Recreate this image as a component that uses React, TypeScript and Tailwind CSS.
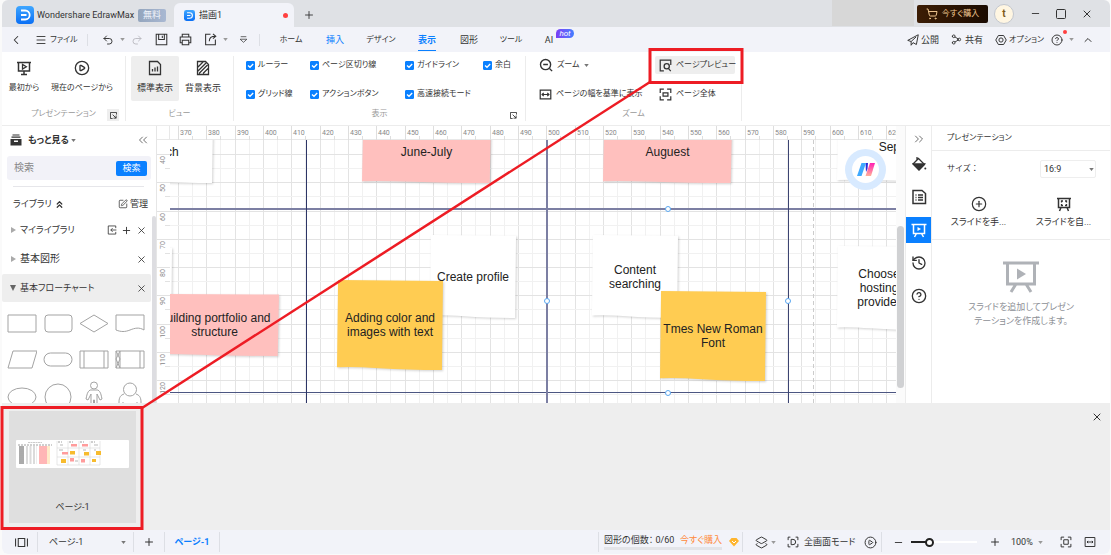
import { ReactNode, useState } from "react";
import {
  ChevronLeft,
  ChevronUp,
  ChevronsLeft,
  ChevronsRight,
  ChevronsUp,
  CircleHelp,
  CirclePlay,
  CirclePlus,
  History,
  Layers2,
  Menu,
  Minus,
  Plus,
  Redo2,
  Share2,
  ShoppingCart,
  Square,
  SquarePen,
  Undo2,
  X,
} from "lucide-react";

interface IconProps {
  children: ReactNode;
  className?: string;
}

function Icon({ children, className = "size-4" }: IconProps) {
  return (
    <svg
      viewBox="0 0 16 16"
      fill="none"
      stroke="currentColor"
      strokeWidth="1.3"
      className={`shrink-0 ${className}`}
      aria-hidden="true"
    >
      {children}
    </svg>
  );
}

function Caret({ className = "text-[#777]" }: { className?: string }) {
  return (
    <svg viewBox="0 0 6 4" className={`h-[3px] w-[5px] shrink-0 ${className}`} aria-hidden="true">
      <path d="M0 0h6L3 4z" fill="currentColor" />
    </svg>
  );
}

function EdrawLogo({ className }: { className: string }) {
  return (
    <svg viewBox="0 0 18 18" className={`shrink-0 ${className}`} aria-hidden="true">
      <defs>
        <linearGradient id="logo" x1="0" y1="0" x2="0" y2="1">
          <stop offset="0" stopColor="#3ea6ff" />
          <stop offset="1" stopColor="#0a6ff5" />
        </linearGradient>
      </defs>
      <rect width="18" height="18" rx="4" fill="url(#logo)" />
      <path
        d="M5 4.5h4.2a4.5 4.5 0 0 1 0 9H5M5 9h5.5"
        fill="none"
        stroke="#fff"
        strokeWidth="1.8"
      />
    </svg>
  );
}

function Divider({ className = "h-3" }: { className?: string }) {
  return <span className={`w-px shrink-0 bg-[#dddfe5] ${className}`} />;
}

function TitleBar() {
  return (
    <header className="flex h-[27px] shrink-0 items-center bg-[#dfe1e5] pl-[14px]">
      <div className="mt-[3px] flex items-center">
        <EdrawLogo className="size-[18px]" />
        <span className="ml-[3px] w-[101px] text-[#333]">Wondershare EdrawMax</span>
        <span className="flex h-[13px] w-7 items-center justify-center rounded-[2px] bg-linear-to-r from-[#93a5bd] to-[#a9b8d2] text-[#eef3fb]">
          無料
        </span>
      </div>
      <div className="ml-2 mt-[3px] flex h-6 w-[120px] items-center rounded-t-md bg-[#f2f3f9] pl-[10px] pr-[6px]">
        <EdrawLogo className="size-[11px]" />
        <span className="ml-1 flex-1">描画1</span>
        <span className="size-[5px] rounded-full bg-[#ff4040]" />
      </div>
      <button type="button" aria-label="新しいタブ" className="ml-[9px] mt-[2px]">
        <Plus className="size-3" strokeWidth={1.8} />
      </button>
      <div className="ml-auto h-[26px] w-[82px] self-start bg-[#d7d7d7]" />
      <button
        type="button"
        className="ml-[3px] flex h-[18px] w-[71px] items-center justify-center gap-1 rounded-[2px] bg-linear-to-r from-[#3c1d05] to-[#1a0b01] text-[8px] text-[#eec690]"
      >
        <ShoppingCart className="size-3" strokeWidth={2} />
        今すぐ購入
      </button>
      <span className="ml-[6px] flex size-5 items-center justify-center rounded-full border border-[#c3c7cf] bg-[#fff6e2] text-[10px] font-bold text-[#7d5b1c]">
        t
      </span>
      <div className="ml-4 mr-[17px] flex items-center gap-[14px]">
        <button type="button" aria-label="最小化">
          <Minus className="size-[11px]" strokeWidth={2} />
        </button>
        <button type="button" aria-label="最大化">
          <Square className="size-3" strokeWidth={2} />
        </button>
        <button type="button" aria-label="閉じる">
          <X className="size-3" strokeWidth={2} />
        </button>
      </div>
    </header>
  );
}

const MENU_TABS = [
  { label: "ホーム", width: "w-11 text-[8px]" },
  { label: "挿入", width: "w-11", accent: true },
  { label: "デザイン", width: "w-12 text-[8px]" },
  { label: "表示", width: "w-11", active: true },
  { label: "図形", width: "w-10" },
  { label: "ツール", width: "w-11 text-[8px]" },
  { label: "AI", width: "w-8", hot: true },
];

function MenuBar() {
  return (
    <div className="flex h-[25px] shrink-0 items-center bg-[#f2f3f9] pl-[7px] pr-4">
      <button type="button" aria-label="戻る">
        <ChevronLeft className="size-[14px]" strokeWidth={1.8} />
      </button>
      <button type="button" className="ml-3 flex w-10 items-center gap-[3px] text-[8px]">
        <Menu className="size-3 shrink-0" strokeWidth={1.8} />
        ファイル
      </button>
      <Divider className="ml-3 h-3" />
      <button type="button" aria-label="元に戻す" className="ml-[14px] flex items-center gap-[6px]">
        <Undo2 className="size-3" strokeWidth={1.9} />
        <Caret className="text-[#999]" />
      </button>
      <button type="button" aria-label="やり直し" className="ml-[6px]">
        <Redo2 className="size-3 text-[#b8b8be]" strokeWidth={1.8} />
      </button>
      <button type="button" aria-label="保存" className="ml-3">
        <Icon className="size-[13px]">
          <path d="M1.5 1.5h13v13h-13zM4.5 1.5v6.5h7V1.5M9 3.5V6" />
        </Icon>
      </button>
      <button type="button" aria-label="印刷" className="ml-[11px]">
        <Icon className="size-[13px]">
          <path d="M4 5V1.5h8V5M4 12H1.5V5h13v7H12M4 9h8v5.5H4z" />
        </Icon>
      </button>
      <button type="button" aria-label="エクスポート" className="ml-3 flex items-center gap-[6px]">
        <Icon className="size-[13px]">
          <path d="M8 1.500H2v13h12V8M6.500 10c0-4 2-6 7.500-6M11 1l3.500 3L11 7" />
        </Icon>
        <Caret className="text-[#999]" />
      </button>
      <button type="button" aria-label="その他" className="mx-[11px]">
        <Icon className="size-[9px]">
          <path d="M3 3h10M2 7.500h12L8 13z" />
        </Icon>
      </button>
      <Divider className="mr-[9px] h-3" />
      <nav className="flex h-full">
        {MENU_TABS.map((tab) => (
          <button
            key={tab.label}
            type="button"
            className={`relative flex h-full items-center justify-center ${tab.width} ${
              tab.active ? "font-bold text-[#0a80ff]" : tab.accent ? "text-[#0a80ff]" : ""
            }`}
          >
            {tab.label}
            {tab.active && (
              <span className="absolute bottom-px h-px w-[18px] bg-[#0a80ff]" />
            )}
            {tab.hot && (
              <span className="absolute -right-[9px] top-[2px] flex h-[9px] w-[18px] items-center justify-center rounded-t-full rounded-br-full bg-linear-to-r from-[#7a3cf5] to-[#3f7dff] text-[8px] leading-[9px] italic text-white">
                hot
              </span>
            )}
          </button>
        ))}
      </nav>
      <div className="ml-auto flex items-center">
        <button type="button" className="flex w-8 items-center gap-[2px]">
          <Icon className="size-3">
            <path d="M1 8.500 15 1l-2.500 13-4.500-2.500L5.500 15v-5zM5.500 10 12 4" />
          </Icon>
          公開
        </button>
        <button type="button" className="ml-3 flex w-8 items-center gap-[3px]">
          <Share2 className="size-[11px] -scale-x-100" strokeWidth={2} />
          共有
        </button>
        <button type="button" className="ml-3 flex w-[47px] items-center gap-[2px] text-[8px]">
          <Icon className="size-3">
            <path d="M4.500 2h7L15 8l-3.500 6h-7L1 8z" />
            <circle cx="8" cy="8" r="2.800" />
          </Icon>
          オプション
        </button>
        <button
          type="button"
          aria-label="ヘルプ"
          className="relative ml-[9px] flex items-center gap-[6px]"
        >
          <CircleHelp className="size-3" strokeWidth={1.9} />
          <span className="absolute -top-1 left-3 size-1 rounded-full bg-[#ff4040]" />
          <Caret className="text-[#999]" />
        </button>
        <button type="button" aria-label="リボンを閉じる" className="ml-2">
          <ChevronUp className="size-3" strokeWidth={2} />
        </button>
      </div>
    </div>
  );
}

interface RibbonGroupProps {
  title: string;
  children: ReactNode;
  width: string;
  launcher?: string;
}

function RibbonGroup({ title, children, width, launcher }: RibbonGroupProps) {
  return (
    <section className={`relative flex flex-col border-r border-[#ececec] text-[8px] ${width}`}>
      <div className="flex h-[52px]">{children}</div>
      <h2 className="flex h-3 items-center justify-center text-[#999]">{title}</h2>
      {launcher && (
        <button
          type="button"
          aria-label={`${title}の設定`}
          className={`absolute bottom-0 right-[6px] flex size-3 items-center justify-center ${launcher}`}
        >
          <Icon className="size-[7px]">
            <path d="M15 6V1H1v14h5M6 6l8 8M14 8v6H8" strokeWidth="2" />
          </Icon>
        </button>
      )}
    </section>
  );
}

function LargeButton({
  label,
  width,
  active,
  children,
}: {
  label: string;
  width: string;
  active?: boolean;
  children: ReactNode;
}) {
  return (
    <button
      type="button"
      className={`flex h-[45px] flex-col items-center gap-[6px] rounded-[2px] pt-1 ${width} ${
        active ? "bg-[#eeeeee]" : ""
      }`}
    >
      {children}
      {label}
    </button>
  );
}

const VIEW_OPTIONS = [
  "ルーラー",
  "ページ区切り線",
  "ガイドライン",
  "余白",
  "グリッド線",
  "アクションボタン",
  "高速接続モード",
];

function Check({ label }: { label: string }) {
  const [checked, setChecked] = useState(true);
  return (
    <label className="relative flex items-center gap-[3px]">
      <input
        type="checkbox"
        checked={checked}
        onChange={() => setChecked(!checked)}
        className="peer size-[9px] shrink-0 appearance-none rounded-[1px] border border-[#0a80ff] checked:bg-[#0a80ff]"
      />
      <svg
        viewBox="0 0 9 9"
        className="pointer-events-none absolute left-0 size-[9px] opacity-0 peer-checked:opacity-100"
        aria-hidden="true"
      >
        <path d="M2 4.500 4 6.300 7.200 3" fill="none" stroke="#fff" strokeWidth="1.300" />
      </svg>
      {label}
    </label>
  );
}

function Ribbon() {
  return (
    <div className="flex h-[74px] shrink-0 border-b border-[#ececec] bg-white pb-1 pt-1">
      <RibbonGroup title="プレゼンテーション" width="w-[124px]" launcher="bg-[#eeeeee]">
        <LargeButton label="最初から" width="w-11">
          <Icon>
            <path d="M1 2.500h14M2.500 2.500v8.500h11V2.500M8 11v3.500M5 14.500h6" strokeWidth="1.500" />
            <path d="M6.500 4.500v4.500L10.300 6.800z" />
          </Icon>
        </LargeButton>
        <LargeButton label="現在のページから" width="w-[72px]">
          <CirclePlay className="size-4" strokeWidth={2} />
        </LargeButton>
      </RibbonGroup>
      <RibbonGroup title="ビュー" width="w-[108px]">
        <LargeButton label="標準表示" width="ml-[5px] w-12 text-[9px]" active>
          <Icon>
            <path d="M2.500 1.500h8l3 3v10h-11zM5.500 11.500V9M8 11.500V7.500M10.500 11.500V6.500" />
          </Icon>
        </LargeButton>
        <LargeButton label="背景表示" width="w-12 text-[9px]">
          <Icon>
            <path d="M2.500 1.500h8l3 3v10h-11zM3 7l5-5M3 11l8-8M4 13.500l8.500-8.500M8 13.500l5-5" />
          </Icon>
        </LargeButton>
      </RibbonGroup>
      <RibbonGroup title="表示" width="w-[292px]" launcher="bg-white">
        <div className="ml-3 grid h-12 grid-cols-[64px_95px_78px_auto] content-between pb-1 pt-[3px]">
          {VIEW_OPTIONS.map((option) => (
            <Check key={option} label={option} />
          ))}
        </div>
      </RibbonGroup>
      <RibbonGroup title="ズーム" width="w-[216px]">
        <div className="ml-[13px] grid h-12 grid-cols-[116px_auto] content-between">
          <button type="button" className="flex h-[18px] items-center gap-1">
            <Icon className="size-[14px]">
              <circle cx="7.500" cy="7.500" r="5.800" strokeWidth="1.600" />
              <path d="M4.800 7.500h5.400M12 12l3 3" strokeWidth="1.600" />
            </Icon>
            ズーム
            <Caret />
          </button>
          <button
            type="button"
            className="flex h-[18px] w-20 items-center gap-1 rounded-[2px] bg-[#eeeeee] pl-1"
          >
            <Icon className="size-[13px]">
              <path d="M6 14.500H1.500v-13h13v6M11.500 11.500l3 3.500" strokeWidth="1.500" />
              <circle cx="9.500" cy="9" r="3.200" strokeWidth="1.600" />
            </Icon>
            ページプレビュー
          </button>
          <button type="button" className="flex h-5 items-center gap-1">
            <Icon className="size-[13px]">
              <path d="M1.500 2.500h13v11h-13zM4 8h8M5.800 6 3.800 8l2 2M10.200 6l2 2-2 2" strokeWidth="1.500" />
            </Icon>
            ページの幅を基準に表示
          </button>
          <button type="button" className="flex h-5 items-center gap-1 pl-1">
            <Icon className="size-[13px]">
              <path
                d="M1.500 6V1.500H6M10 1.500h4.500V6M14.500 10v4.500H10M6 14.500H1.500V10M5 6h6v4H5z"
                strokeWidth="1.500"
              />
            </Icon>
            ページ全体
          </button>
        </div>
      </RibbonGroup>
    </div>
  );
}

const SHAPES: ReactNode[] = [
  <path d="M1 6h28v17H1z" />,
  <rect x="2" y="6" width="27" height="17" rx="3" />,
  <path d="M1 14.500 15 6l14 8.500L15 23z" />,
  <path d="M1 6h28v15c-5-3-9-2-14 0s-9 2-14 0z" />,
  <path d="M6 6h24l-5 17H1z" />,
  <rect x="1" y="8" width="28" height="13" rx="6.500" />,
  <path d="M1 6h28v17H1zM5 6v17M25 6v17" />,
  <path d="M1 6h28v17H1zM5 6v17M25 6v17M1 6l4 8-4 9M5 6l-4 8 4 9" />,
  <ellipse cx="15" cy="16" rx="14" ry="9" />,
  <circle cx="15" cy="16" r="13" />,
  <path d="M15 1a3.500 3.500 0 1 1 0 7 3.500 3.500 0 0 1 0-7zM11 9h8c3 2 3 5 4 9l-2 1-3-6v14h-2.500v-8h-1v8H12V13l-3 6-2-1c1-4 1-7 4-9z" />,
  <path d="M15 2a6.500 6.500 0 1 1 0 13 6.500 6.500 0 0 1 0-13zM9 13c-3 1-5 3-5 8v8h22v-8c0-5-2-7-5-8M8 21v8M22 21v8" />,
];

interface LibraryRowProps {
  label: string;
  size?: string;
  open?: boolean;
  tools?: boolean;
}

function LibraryRow({ label, size = "text-[9px]", open, tools }: LibraryRowProps) {
  return (
    <li
      className={`flex h-7 items-center gap-1 rounded-[2px] pl-2 pr-1 ${size} ${
        open ? "bg-[#eeeeee]" : ""
      }`}
    >
      <svg viewBox="0 0 6 6" className="size-[6px] shrink-0" aria-hidden="true">
        {open ? <path d="M0 0h6L3 6z" fill="#666" /> : <path d="M1 0v6l5-3z" fill="#aaa" />}
      </svg>
      <span className="flex-1">{label}</span>
      {tools && (
        <>
          <button type="button" aria-label="読み込み">
            <Icon className="size-[10px]">
              <path d="M14 5V1.500H2v13h12V11M15 8H6M9 5 6 8l3 3" />
            </Icon>
          </button>
          <button type="button" aria-label="追加">
            <Plus className="size-[11px]" strokeWidth={2} />
          </button>
        </>
      )}
      <button type="button" aria-label={`${label}を閉じる`}>
        <X className="size-[11px]" strokeWidth={1.8} />
      </button>
    </li>
  );
}

function LibraryPanel() {
  return (
    <aside className="flex w-[155px] shrink-0 flex-col overflow-hidden border-r border-[#e6e6e6] bg-white">
      <div className="flex h-7 shrink-0 items-center pl-2 pr-[6px]">
        <svg viewBox="0 0 12 12" className="size-3 shrink-0" aria-hidden="true">
          <path d="M2.500 1h7M1.500 3.200h9" stroke="#333" strokeWidth="1.200" />
          <path d="M.5 5h11v6.500H.5z" fill="#333" />
          <path d="M4 6.500h4v1.500H4z" fill="#fff" />
        </svg>
        <button type="button" className="ml-[6px] flex items-center gap-[2px] font-bold">
          もっと見る
          <Caret />
        </button>
        <button type="button" aria-label="パネルを閉じる" className="ml-auto">
          <ChevronsLeft className="size-[14px] text-[#666]" strokeWidth={1.6} />
        </button>
      </div>
      <form
        onSubmit={(event) => event.preventDefault()}
        className="ml-[5px] mr-[5px] mt-[2px] flex h-6 shrink-0 items-center rounded-[3px] bg-[#f2f2f8] pl-[7px] pr-1"
      >
        <input
          type="search"
          aria-label="検索"
          placeholder="検索"
          className="min-w-0 flex-1 bg-transparent text-[10px] outline-none placeholder:text-[#888]"
        />
        <button
          type="submit"
          className="flex h-[15px] w-[31px] items-center justify-center rounded-[2px] bg-[#0a80ff] text-white"
        >
          検索
        </button>
      </form>
      <hr className="ml-[11px] mr-3 mt-[6px] shrink-0 border-[#e6e6ea]" />
      <div className="mt-[5px] flex h-6 shrink-0 items-center pl-[11px] pr-2">
        <span>ライブラリ</span>
        <ChevronsUp className="ml-[2px] size-[11px]" strokeWidth={2.6} />
        <button type="button" className="ml-auto flex items-center gap-[2px]">
          <SquarePen className="size-[10px]" strokeWidth={1.8} />
          管理
        </button>
      </div>
      <div className="flex min-h-0 flex-1">
        <div className="flex-1">
          <ul className="flex flex-col gap-px">
            <LibraryRow label="マイライブラリ" tools />
            <LibraryRow label="基本図形" size="text-[10px]" />
            <LibraryRow label="基本フローチャート" open />
          </ul>
          <div className="ml-[2px] grid w-36 grid-cols-4 pt-1">
            {SHAPES.map((shape, index) => (
              <div key={index} className="flex h-9 items-center justify-center">
                <svg viewBox="0 0 30 30" fill="none" stroke="#a3a3a3" className="size-[30px]">
                  {shape}
                </svg>
              </div>
            ))}
          </div>
        </div>
        <div className="ml-px w-1 rounded-t-full bg-[#dddde1]" />
      </div>
    </aside>
  );
}

const MAJOR_X = Array.from({ length: 26 }, (_, i) => Math.round(8 + (i * 85) / 3));
const MAJOR_Y = Array.from({ length: 9 }, (_, i) => Math.round(14 + (i * 113) / 4));

const NOTE_COLORS = {
  white: "#ffffff",
  pink: "#ffc0be",
  yellow: "#ffcc52",
};

interface NoteProps {
  place: string;
  color: keyof typeof NOTE_COLORS;
  lines?: string[];
}

// the lower edge curls a little, like a real sticky note
function Note({ place, color, lines = [] }: NoteProps) {
  return (
    <div className={`absolute flex flex-col items-center justify-center ${place}`}>
      <svg
        viewBox="0 0 100 100"
        preserveAspectRatio="none"
        className="absolute inset-0 size-full overflow-visible drop-shadow-[1px_1px_1px_rgba(0,0,0,0.18)]"
        aria-hidden="true"
      >
        <path d="M1 0 100 1 99 100 Q65 100 40 98 T0 97z" fill={NOTE_COLORS[color]} />
      </svg>
      {lines.map((line) => (
        <span key={line} className="relative">
          {line}
        </span>
      ))}
    </div>
  );
}

function Handle({ place }: { place: string }) {
  return <span className={`absolute size-[6px] rounded-full border border-[#5aa7f0] bg-white ${place}`} />;
}

function Canvas() {
  return (
    <div className="flex min-w-0 flex-1 flex-col overflow-hidden bg-white">
      <div className="flex h-[14px] shrink-0 border-b border-[#e8e8e8]">
        <div className="w-[13px] shrink-0 border-r border-[#e8e8e8]" />
        <svg className="h-[14px] min-w-0 flex-1" aria-hidden="true">
          {MAJOR_X.map((x, i) => (
            <g key={x}>
              <path d={`M${x + 0.5} 0v14M${x + 14.5} 10v4`} stroke="#dedede" />
              <text x={x + 2} y="9" className="fill-[#888] text-[7px]">
                {370 + i * 10}
              </text>
            </g>
          ))}
        </svg>
      </div>
      <div className="flex min-h-0 flex-1">
        <svg className="h-full w-[13px] shrink-0" aria-hidden="true">
          {MAJOR_Y.map((y, i) => (
            <g key={y}>
              <path d={`M0 ${y + 0.5}h13M8 ${y + 14.5}h5`} stroke="#e2e2e2" />
              <text
                transform={`translate(8 ${y + 2}) rotate(-90)`}
                textAnchor="end"
                className="fill-[#888] text-[7px]"
              >
                {40 + i * 10}
              </text>
            </g>
          ))}
        </svg>
        <div className="relative min-w-0 flex-1 overflow-hidden whitespace-nowrap font-['Liberation_Sans',Arial,sans-serif] text-[12px] leading-[14px] text-[#222]">
          <svg className="absolute inset-0 size-full" aria-hidden="true">
            {MAJOR_X.map((x) => (
              <g key={x}>
                <line x1={x + 0.5} x2={x + 0.5} y1="0" y2="100%" stroke="#e3e3e3" />
                <line x1={x + 14.5} x2={x + 14.5} y1="0" y2="100%" stroke="#f1f1f1" />
              </g>
            ))}
            {MAJOR_Y.map((y) => (
              <g key={y}>
                <line x1="0" x2="100%" y1={y + 0.5} y2={y + 0.5} stroke="#e3e3e3" />
                <line x1="0" x2="100%" y1={y + 14.5} y2={y + 14.5} stroke="#f1f1f1" />
              </g>
            ))}
            <line x1="643.5" x2="643.5" y1="0" y2="100%" stroke="#cccccc" strokeDasharray="4 3" />
            <line x1="0" x2="100%" y1="69" y2="69" stroke="#7c7fa3" strokeWidth="2" />
            <line x1="0" x2="100%" y1="252.5" y2="252.5" stroke="#4c5682" />
            <line x1="136.5" x2="136.5" y1="0" y2="100%" stroke="#2d3566" />
            <line x1="377" x2="377" y1="0" y2="100%" stroke="#7c7fa3" strokeWidth="2" />
            <line x1="618.5" x2="618.5" y1="0" y2="100%" stroke="#3c4472" />
          </svg>
          <Note place="-left-[59px] -top-[19px] h-[62px] w-[102px]" color="white" lines={["March"]} />
          <Note place="left-[192px] -top-[19px] h-[62px] w-[129px]" color="pink" lines={["June-July"]} />
          <Note place="left-[433px] -top-[19px] h-[62px] w-[129px]" color="pink" lines={["Auguest"]} />
          <Note place="left-[667px] -top-[28px] h-[70px] w-[142px]" color="white" lines={["September"]} />
          <Note place="-left-[84px] top-[107px] h-[83px] w-[86px]" color="white" />
          <Note
            place="-left-[20px] top-[154px] h-[62px] w-[129px]"
            color="pink"
            lines={["Building portfolio and", "structure"]}
          />
          <Note place="left-[260px] top-[95px] h-[83px] w-[86px]" color="white" lines={["Create profile"]} />
          <Note
            place="left-[167px] top-[140px] h-[90px] w-[106px]"
            color="yellow"
            lines={["Adding color and", "images with text"]}
          />
          <Note
            place="left-[422px] top-[95px] h-[83px] w-[86px]"
            color="white"
            lines={["Content", "searching"]}
          />
          <Note
            place="left-[490px] top-[151px] h-[90px] w-[106px]"
            color="yellow"
            lines={["Tmes New Roman", "Font"]}
          />
          <Note
            place="left-[667px] top-[106px] h-[84px] w-[84px]"
            color="white"
            lines={["Choose", "hosting", "provider"]}
          />
          <Handle place="left-[495px] top-[66px]" />
          <Handle place="left-[374px] top-[158px]" />
          <Handle place="left-[615px] top-[158px]" />
          <Handle place="left-[495px] top-[250px]" />
          <svg viewBox="0 0 41 41" className="absolute left-[675px] top-[9px] size-[41px]" aria-hidden="true">
            <defs>
              <linearGradient id="mark" x1="0" y1="0" x2="0" y2="1">
                <stop offset="0" stopColor="#ff1fb4" />
                <stop offset="1" stopColor="#ffb199" />
              </linearGradient>
            </defs>
            <circle cx="20.500" cy="20.500" r="20.500" fill="#d8eaff" />
            <circle cx="20.500" cy="20.500" r="13.500" fill="#fff" />
            <path d="M20.500 14H23l-.5 6-1.500 3z" fill="#2a2bd8" />
            <path d="M16.500 14h4.500L16.500 27H12z" fill="#3ea9ff" />
            <path d="M25 14h5l-4 13h-5.500z" fill="url(#mark)" />
          </svg>
        </div>
      </div>
    </div>
  );
}

function ToolStrip() {
  return (
    <div className="flex w-[26px] shrink-0 flex-col gap-[7px] border-r border-[#ececec] bg-white [&>button]:flex [&>button]:h-[26px] [&>button]:items-center [&>button]:justify-center">
      <button type="button" aria-label="折りたたむ" className="-mb-2">
        <ChevronsRight className="size-[14px] text-[#666]" strokeWidth={1.6} />
      </button>
      <button type="button" aria-label="塗りつぶし">
        <Icon>
          <path d="M6 1v3M7.500 2.500l6 6L8 14 2 8z" />
          <path d="M2.500 8h11L8 13.500z" fill="currentColor" />
          <circle cx="14.300" cy="12.500" r="1" fill="currentColor" stroke="none" />
        </Icon>
      </button>
      <button type="button" aria-label="ページ設定">
        <Icon>
          <path d="M2 1.500h9l3.500 3v10H2zM4.500 6h1M7 6h5M4.500 8.500h1M7 8.500h5M4.500 11h1M7 11h5" strokeWidth="1.500" />
        </Icon>
      </button>
      <button type="button" aria-label="プレゼンテーション" className="bg-[#0a80ff] text-white">
        <Icon>
          <path d="M.5 2.500h15M2.500 2.500v9h11v-9M5.500 11.500 3.500 15M10.500 11.500l2 3.500" strokeWidth="1.500" />
          <path d="M6.500 5v4l3.500-2z" fill="currentColor" stroke="none" />
        </Icon>
      </button>
      <button type="button" aria-label="履歴">
        <History className="size-4" strokeWidth={2} />
      </button>
      <button type="button" aria-label="ヘルプ">
        <CircleHelp className="size-4" strokeWidth={2} />
      </button>
    </div>
  );
}

function PresentationPanel() {
  return (
    <aside className="flex w-[178px] shrink-0 flex-col bg-white">
      <h2 className="flex h-[25px] items-center border-b border-[#ececec] pl-[15px] text-[8px]">
        プレゼンテーション
      </h2>
      <div className="flex h-9 items-center justify-between pl-[15px] pr-[14px]">
        <label htmlFor="size" className="text-[8px] [font-feature-settings:normal]">
          サイズ：
        </label>
        <div className="relative flex items-center">
          <select
            id="size"
            className="h-[18px] w-14 appearance-none rounded-[2px] border border-[#eeeeee] pl-[3px] leading-none outline-none"
          >
            <option>16:9</option>
          </select>
          <span className="pointer-events-none absolute right-[2px]">
            <Caret />
          </span>
        </div>
      </div>
      <div className="grid h-[53px] grid-cols-2 border-b border-[#ececec] px-1 pt-[9px]">
        <button type="button" className="flex flex-col items-center gap-1">
          <CirclePlus className="size-4 shrink-0" strokeWidth={1.8} />
          スライドを手...
        </button>
        <button type="button" className="flex flex-col items-center gap-1">
          <Icon>
            <path d="M1 2.500h14M2.500 2.500v9h11v-9M5 11.500 3.500 15M11 11.500l1.500 3.500" strokeWidth="1.500" />
            <path d="M5.500 6.500v-1.500h1.500M9 5h1.500v1.500M10.500 8v1.500H9M7 9.500H5.500V8" />
          </Icon>
          スライドを自...
        </button>
      </div>
      <div className="flex flex-col items-center pt-[21px] text-[#8d9096]">
        <svg viewBox="0 0 36 32" className="h-8 w-9" fill="none" stroke="#afb2b7" aria-hidden="true">
          <path d="M0 2h36" strokeWidth="3" />
          <path d="M4.500 2v21h27V2M13 23l-5 8M23 23l5 8" strokeWidth="3" />
          <path d="M14 7.500v11l9-5.500z" fill="#afb2b7" stroke="none" />
        </svg>
        <p className="mt-[7px] text-center leading-[14px]">
          スライドを追加してプレゼン
          <br />
          テーションを作成します。
        </p>
      </div>
    </aside>
  );
}

const THUMB_ROWS = [7, 9, 11, 13, 15, 17, 19, 21, 23];

function PagePreview() {
  return (
    <section className="flex shrink-0 items-start justify-between bg-[#eeeeee] pb-[7px] pl-[7px] pr-[7px] pt-2">
      <figure className="flex h-28 w-[127px] flex-col items-center justify-between bg-[#dfdfdf] pb-[10px] pt-[29px]">
        <svg viewBox="0 0 113 28" className="h-7 w-[113px]" aria-hidden="true">
          <rect width="113" height="28" rx="1" fill="#fff" />
          <path d="M12 2.500h14" stroke="#aaa" strokeWidth=".6" strokeDasharray="2 .5" />
          <path d="M2 5h34M42 2h4M53 2h4M64 2h4M75 2h4" stroke="#888" strokeWidth=".8" strokeDasharray="2 1" />
          {THUMB_ROWS.map((y) => (
            <g key={y}>
              <path d={`M3 ${y}h5`} stroke="#444" strokeWidth=".9" />
              <path d={`M10 ${y}h11`} stroke="#999" strokeWidth=".7" strokeDasharray="2 1.500" />
              <path d={`M23 ${y}h8`} stroke="#ff8f8f" strokeWidth="1.300" />
              <path d={`M31 ${y}h3`} stroke="#ffe0ae" strokeWidth="1.300" />
            </g>
          ))}
          <path d="M41 1v24M52 1v24M63 1v24M74 1v24M84 1v24M41 8h43M41 17h43M41 25h43" stroke="#ccc" strokeWidth=".5" />
          <path d="M55 4h6v2.500h-6zM66 4h6v2.500h-6zM46 12h6v2.500h-6zM54 18h4v3.500h-4zM65 19h4v3.500h-4z" fill="#ff9c9c" />
          <path d="M54 11h5v3.500h-5zM68 12h5v3.500h-5zM80 11h5v4h-5zM45 19h5v4h-5zM76 19h4v3h-4z" fill="#f7bb2e" />
          <path d="M44 5h3M78 5h4M43 10h4M67 10h3M59 21h3M78 10h2" stroke="#999" strokeWidth=".7" />
        </svg>
        <figcaption>ページ-1</figcaption>
      </figure>
      <button type="button" aria-label="プレビューを閉じる">
        <X className="size-3" strokeWidth={2} />
      </button>
    </section>
  );
}

function StatusBar() {
  const [zoom, setZoom] = useState(25);
  return (
    <footer className="flex h-6 shrink-0 items-center rounded-b-md bg-[#f2f3f9] pl-[13px] pr-3">
      <button type="button" aria-label="ページ一覧">
        <Icon className="size-[13px]">
          <path d="M4 3h8v10H4zM.7 3v10M15.300 3v10" />
        </Icon>
      </button>
      <Divider className="ml-[9px] h-5" />
      <div className="relative flex w-[95px] items-center">
        <select
          aria-label="ページ"
          className="w-full appearance-none bg-transparent pl-[11px] leading-none outline-none"
        >
          <option>ページ-1</option>
        </select>
        <span className="pointer-events-none absolute right-[7px]">
          <Caret />
        </span>
      </div>
      <Divider className="h-5" />
      <button type="button" aria-label="ページを追加" className="mx-[9px]">
        <Plus className="size-3" strokeWidth={2} />
      </button>
      <Divider className="h-5" />
      <button type="button" className="w-[54px] font-bold text-[#0a80ff]">
        ページ-1
      </button>
      <Divider className="h-5" />
      <div className="ml-auto flex items-center">
        <Divider className="h-5" />
        <div className="ml-[5px] w-[118px]">
          <div className="flex items-center justify-between">
            <span>図形の個数： 0/60</span>
            <a href="#buy" className="text-[#ff8a3c]">
              今すぐ購入
            </a>
          </div>
          <div className="mt-px h-[3px] bg-[#e3e4e8]" />
        </div>
        <svg viewBox="0 0 10 10" className="ml-[7px] size-[10px]" aria-hidden="true">
          <path d="M2.500 1h5L10 4 5 9.500 0 4z" fill="#ffb52e" />
          <path d="M3 4l2 2 2-2" stroke="#fff" fill="none" />
        </svg>
        <Divider className="ml-[3px] h-5" />
        <button type="button" aria-label="レイヤー" className="ml-3 flex items-center gap-[3px]">
          <Layers2 className="size-[13px]" strokeWidth={1.8} />
          <Caret className="text-[#999]" />
        </button>
        <button type="button" className="ml-[11px] flex w-[70px] items-center gap-[5px]">
          <Icon className="size-3">
            <path d="M4.500 1.500h-3v4M11.500 1.500h3v4M14.500 10.500v4h-3M4.500 14.500h-3v-4M5.500 4.500h2.500a3.500 3.500 0 0 1 0 7H5.500z" />
          </Icon>
          全画面モード
        </button>
        <button type="button" aria-label="再生" className="ml-[7px]">
          <CirclePlay className="size-[13px]" strokeWidth={1.8} />
        </button>
        <Divider className="ml-1 h-5" />
        <button type="button" aria-label="縮小" className="ml-[11px]">
          <Minus className="size-[11px]" strokeWidth={2} />
        </button>
        <input
          type="range"
          aria-label="ズーム"
          value={zoom}
          onChange={(event) => setZoom(Number(event.target.value))}
          className="ml-[7px] h-[2px] w-[66px] appearance-none bg-[linear-gradient(to_right,#222_25%,#fff_25%)] [&::-webkit-slider-thumb]:size-[9px] [&::-webkit-slider-thumb]:appearance-none [&::-webkit-slider-thumb]:rounded-full [&::-webkit-slider-thumb]:border-2 [&::-webkit-slider-thumb]:border-[#222] [&::-webkit-slider-thumb]:bg-white"
        />
        <button type="button" aria-label="拡大" className="ml-3">
          <Plus className="size-3" strokeWidth={2} />
        </button>
        <button type="button" className="ml-[10px] flex w-8 items-center justify-between">
          100%
          <Caret className="text-[#999]" />
        </button>
        <button type="button" aria-label="ページ全体" className="ml-[17px]">
          <Icon className="size-3">
            <path d="M1.500 5.500v-4h4M10.500 1.500h4v4M14.500 10.500v4h-4M5.500 14.500h-4v-4M5 5h6v6H5z" />
          </Icon>
        </button>
        <button type="button" aria-label="ページ幅" className="ml-3 mr-[2px]">
          <Icon className="size-3">
            <path d="M1.500 2h13v12h-13zM4 8h8M5.500 6.500 4 8l1.500 1.500M10.500 6.500 12 8l-1.500 1.500" />
          </Icon>
        </button>
      </div>
    </footer>
  );
}

function Callouts() {
  return (
    <svg
      className="pointer-events-none absolute inset-0 size-full"
      fill="none"
      stroke="#ed1c24"
      strokeWidth="3"
      aria-hidden="true"
    >
      <rect x="650" y="49.500" width="92" height="33" />
      <rect x="2" y="407.500" width="140" height="121" />
      <path d="M650 82 142 408" strokeWidth="2.500" />
    </svg>
  );
}

export default function App() {
  return (
    <div className="relative flex h-screen flex-col overflow-hidden whitespace-nowrap bg-[#fafafa] pb-px pl-[2px] pr-px font-['Roboto','Noto_Sans_CJK_JP',sans-serif] text-[9px] leading-3 text-[#333] [font-feature-settings:'palt']">
      <div className="flex min-h-0 flex-1 flex-col overflow-hidden rounded-md">
        <TitleBar />
        <MenuBar />
        <Ribbon />
        <main className="flex min-h-0 flex-1">
          <LibraryPanel />
          <Canvas />
          <div className="flex w-[10px] shrink-0 items-end justify-center border-r border-[#ececec] bg-[#fbfbfb] pb-[15px]">
            <div className="h-[62%] w-[7px] rounded-full bg-[#d0d1d3]" />
          </div>
          <ToolStrip />
          <PresentationPanel />
        </main>
        <PagePreview />
        <StatusBar />
      </div>
      <Callouts />
    </div>
  );
}
